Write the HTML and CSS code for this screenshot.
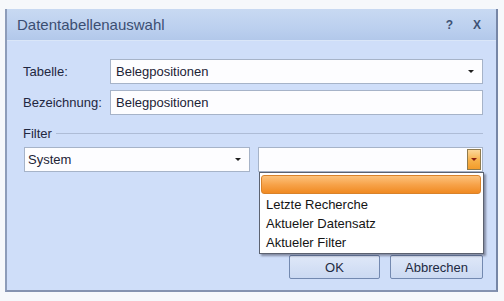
FILE: index.html
```html
<!DOCTYPE html>
<html lang="de">
  <head>
    <meta charset="UTF-8" />
    <meta name="viewport" content="width=device-width, initial-scale=1.0" />
    <title>Datentabellenauswahl</title>
    <link rel="stylesheet" href="styles.css">
  </head>
  <body>
    <div class="window">
      <div class="titlebar">
        <span class="title">Datentabellenauswahl</span>
        <span class="title-btns">
          <span class="tbtn">?</span>
          <span class="tbtn">X</span>
        </span>
      </div>

      <div class="content">
        <div class="form">
          <label class="lbl">Tabelle:</label>
          <div class="field combo">
            <span>Belegpositionen</span>
            <span class="arrow"></span>
          </div>
          <label class="lbl">Bezeichnung:</label>
          <div class="field">
            <span>Belegpositionen</span>
          </div>
        </div>

        <div class="group">
          <div class="group-head">
            <span>Filter</span>
            <span class="group-line"></span>
          </div>
          <div class="combos">
            <div class="field combo">
              <span>System</span>
              <span class="arrow"></span>
            </div>
            <div class="field combo open">
              <span></span>
              <span class="drop-btn"><span class="arrow red"></span></span>
              <!-- aufgeklappte Liste -->
              <ul class="droplist">
                <li class="sel"></li>
                <li>Letzte Recherche</li>
                <li>Aktueler Datensatz</li>
                <li>Aktueler Filter</li>
              </ul>
            </div>
          </div>
        </div>

        <div class="buttons">
          <button class="btn ok">OK</button>
          <button class="btn cancel">Abbrechen</button>
        </div>
      </div>
    </div>
  </body>
</html>
```

FILE: styles.css
```css
body {
  margin: 0;
  background-color: #f6f8fb;
  font-family: "Liberation Sans", Arial, sans-serif;
  font-size: 13px;
  color: #1c2336;
}
.window {
  margin: 9px 6px 0 5px;
  height: 281px;
  display: flex;
  flex-direction: column;
  background-color: #cfdef9;
  border-left: 2px solid #8d9cb9;
  border-right: 2px solid #7686a6;
  border-bottom: 2px solid #8593b0;
}
.titlebar {
  height: 31px;
  flex-shrink: 0;
  display: flex;
  align-items: center;
  justify-content: space-between;
  padding: 0 15px 0 10px;
  background: linear-gradient(#c8d9f2, #bcd0ef 60%, #b2c8ea);
  border-bottom: 1px solid #dae6f8;
}
.title {
  font-size: 15px;
  color: #3b4e72;
  padding-bottom: 1px;
}
.title-btns {
  display: flex;
  gap: 20px;
}
.tbtn {
  font-size: 12px;
  font-weight: bold;
  color: #3e5275;
}
.content {
  flex: 1;
  padding: 18px 13px 0 16px;
  display: flex;
  flex-direction: column;
}
.form {
  display: grid;
  grid-template-columns: 85px 1fr;
  column-gap: 2px;
  row-gap: 6px;
  align-items: center;
}
.lbl {
  color: #1f2740;
}
.field {
  position: relative;
  height: 25px;
  box-sizing: border-box;
  display: flex;
  align-items: center;
  justify-content: space-between;
  padding: 0 5px 0 5px;
  background-color: #fdfdff;
  border: 1px solid #a6b3c8;
}
.arrow {
  width: 0;
  height: 0;
  border-left: 3px solid transparent;
  border-right: 3px solid transparent;
  border-top: 3px solid #202020;
  margin-right: 3px;
}
.arrow.red {
  border-top-color: #8a1f10;
  margin: 0;
}
.group {
  margin-top: 10px;
}
.group-head {
  display: flex;
  align-items: center;
  gap: 4px;
  height: 16px;
  color: #1f2740;
}
.group-line {
  flex: 1;
  height: 1px;
  background-color: #aebcd6;
  margin-top: 1px;
}
.combos {
  margin-top: 6px;
  display: flex;
  gap: 8px;
  padding-left: 1px;
}
.combos .field {
  flex: 1;
  padding-left: 3px;
}
.combos .field:first-child {
  flex: 0 0 226px;
}
.drop-btn {
  width: 14px;
  height: 21px;
  margin-right: -4px;
  display: flex;
  align-items: center;
  justify-content: center;
  background: linear-gradient(#fbd79a, #f6b049 55%, #f29c2b);
  border: 1px solid #8f7b4e;
  box-sizing: border-box;
}
.droplist {
  position: absolute;
  left: 0;
  top: 24px;
  right: -2px;
  list-style: none;
  margin: 0;
  padding: 1px;
  background-color: #ffffff;
  border: 1px solid #5c6270;
  box-shadow: 2px 2px 2px rgba(40, 40, 60, 0.45);
  z-index: 2;
}
.droplist li {
  height: 19px;
  line-height: 19px;
  padding-left: 5px;
  color: #141414;
}
.droplist li.sel {
  height: 17px;
  margin: 1px 1px 1px 0;
  border: 1px solid #d9822a;
  border-radius: 3px;
  background: linear-gradient(#fcc27c, #f7a34a 50%, #f08a22);
}
.buttons {
  margin-top: 83px;
  display: flex;
  justify-content: flex-end;
  gap: 10px;
}
.btn {
  height: 24px;
  font-family: "Liberation Sans", Arial, sans-serif;
  font-size: 13px;
  color: #1e2a42;
  background: linear-gradient(#dfe8f8, #cbd9f2);
  border: 1px solid #7389b0;
  border-radius: 2px;
  padding: 0;
}
.btn.ok {
  width: 91px;
}
.btn.cancel {
  width: 93px;
}
```
